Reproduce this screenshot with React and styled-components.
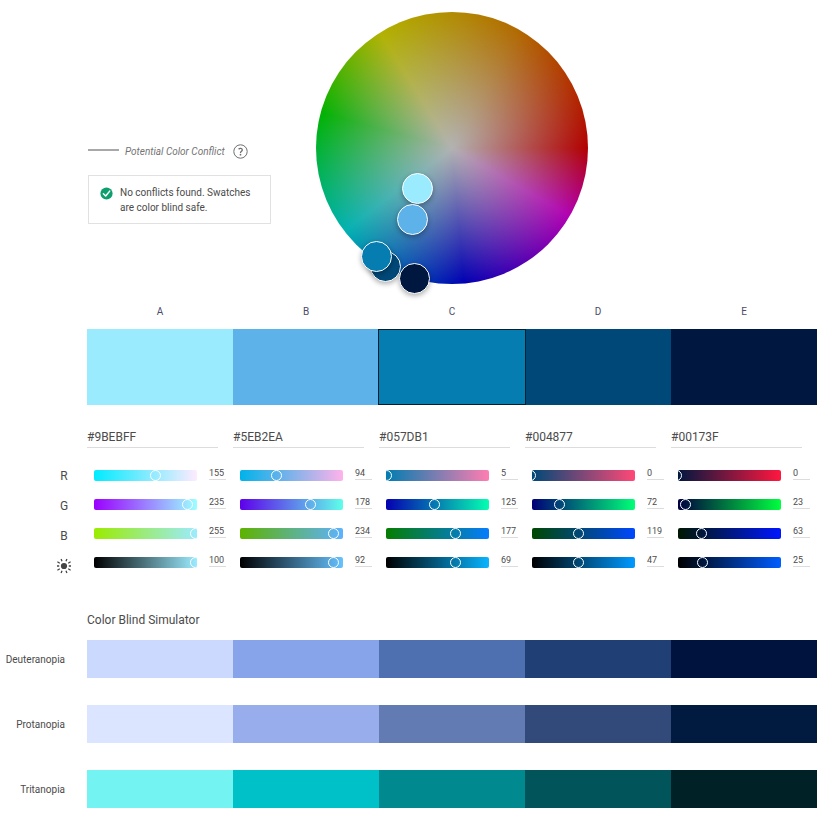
import React, { useState } from "react";
import styled, { createGlobalStyle, css } from "styled-components";

const GlobalStyle = createGlobalStyle`
  *, *::before, *::after { box-sizing: border-box; }
  body {
    margin: 0;
    background: #fff;
    color: #4b4b4b;
    font-family: Roboto, "Noto Sans", sans-serif;
    font-size: 10px;
  }
  input, button { font: inherit; color: inherit; }
`;

const Page = styled.main`
  --gutter: 87px;
  padding: 12px 6px 7px 0;
`;

const Top = styled.section`
  display: grid;
  grid-template-columns: 183px auto;
  justify-content: start;
  column-gap: 45px;
  padding-left: 88px;
`;

const Status = styled.div`
  padding-top: 131px;
`;

const Legend = styled.div`
  display: flex;
  align-items: center;
  height: 16px;
  color: #747474;
  font-style: italic;
  white-space: nowrap;
`;

const LegendLine = styled.span`
  width: 31px;
  height: 2px;
  margin: 0 6px 3px 0;
  background: #a8a8a8;
`;

const HelpButton = styled.button`
  display: flex;
  margin: 0 0 0 8px;
  padding: 0;
  border: 0;
  background: none;
  color: #6e6e6e;
`;

const Notice = styled.div`
  display: flex;
  gap: 7px;
  margin-top: 16px;
  padding: 9px 11px 8px;
  border: 1px solid #e1e1e1;
  line-height: 15px;

  svg { flex: none; margin-top: 2px; }
  p { margin: 0; white-space: nowrap; }
`;

const Wheel = styled.div`
  position: relative;
  width: 272px;
  height: 272px;
  border-radius: 50%;
  background:
    radial-gradient(circle closest-side, #b2b2b2, rgba(178, 178, 178, 0)),
    conic-gradient(
      from 90deg,
      #b20000 0deg, #b200b2 30deg, #0000b2 85deg, #00b2b2 142deg,
      #00b200 195deg, #b2b200 238deg, #b26800 300deg, #b20000 360deg
    );
`;

const Marker = styled.button`
  position: absolute;
  left: ${(p) => p.$x}px;
  top: ${(p) => p.$y}px;
  width: 31px;
  height: 31px;
  padding: 0;
  border: 1px solid #fff;
  border-radius: 50%;
  background: ${(p) => p.$color};
  box-shadow: 0 2px 5px rgba(0, 0, 0, 0.3);
`;

const Columns = styled.div`
  display: grid;
  grid-template-columns: repeat(5, minmax(0, 1fr));
`;

const Palette = styled(Columns)`
  margin: 20px 0 0 var(--gutter);
`;

const Letter = styled.span`
  height: 25px;
  color: #4b4b6a;
  line-height: 16px;
  text-align: center;
`;

const Swatch = styled.button`
  height: 76px;
  padding: 0;
  border: 0;
  background: ${(p) => p.$color};
  ${(p) => p.$selected && css`
    margin-right: -1px;
    margin-left: -1px;
    border: 1px solid #04202e;
    z-index: 1;
  `}
`;

const Editor = styled.section`
  display: grid;
  grid-template-columns: var(--gutter) minmax(0, 1fr);
  margin-top: 24px;
`;

const ChannelNames = styled.div`
  display: flex;
  flex-direction: column;
  align-items: center;
  gap: 14px;
  padding: 39px 0 0 41px;
  font-size: 12px;
  line-height: 16px;
`;

const SunIcon = styled.svg`
  display: block;
`;

const HexInput = styled.input`
  display: block;
  width: 90%;
  height: 19px;
  padding: 0 0 3px;
  border: 0;
  border-bottom: 1px solid #dcdcdc;
  border-radius: 0;
  background: none;
  font-size: 12px;
  outline: none;
`;

const Channels = styled.div`
  display: grid;
  gap: 13px;
  margin-top: 17px;
  padding: 0 7px;
`;

const Channel = styled.div`
  display: grid;
  grid-template-columns: minmax(0, 1fr) 17px;
  column-gap: 12px;
  height: 16px;
`;

const Track = styled.div`
  height: 11px;
  margin-top: 5px;
  overflow: hidden;
  border-radius: 2px;
`;

const Range = styled.input`
  display: block;
  width: calc(100% + 11px);
  height: 11px;
  margin: 0 0 0 -7px;
  appearance: none;
  background: none;

  &::-webkit-slider-thumb {
    appearance: none;
    width: 11px;
    height: 11px;
    border: 1px solid #fff;
    border-radius: 50%;
    background: none;
  }
`;

const ValueInput = styled.input`
  width: 100%;
  height: 15px;
  padding: 1px 0 0;
  border: 0;
  border-bottom: 1px solid #dcdcdc;
  border-radius: 0;
  background: none;
  font-size: 9px;
  outline: none;
`;

const Simulator = styled.section`
  margin-top: 37px;
`;

const Title = styled.h2`
  margin: 0 0 11px var(--gutter);
  font-size: 12px;
  font-weight: 400;
  line-height: 18px;
`;

const SimRows = styled.div`
  display: grid;
  gap: 27px;
`;

const SimRow = styled.div`
  display: grid;
  grid-template-columns: var(--gutter) minmax(0, 1fr);
  align-items: center;
`;

const SimName = styled.span`
  padding-right: 22px;
  text-align: right;
`;

const SimCell = styled.div`
  height: 38px;
  background: ${(p) => p.$color};
`;

const swatches = [
  { letter: "A", hex: "#9BEBFF", rgb: [155, 235, 255], light: 100, x: 86, y: 161 },
  { letter: "B", hex: "#5EB2EA", rgb: [94, 178, 234], light: 92, x: 81, y: 192 },
  { letter: "D", hex: "#004877", rgb: [0, 72, 119], light: 47, x: 54, y: 239 },
  { letter: "C", hex: "#057DB1", rgb: [5, 125, 177], light: 69, x: 45, y: 229 },
  { letter: "E", hex: "#00173F", rgb: [0, 23, 63], light: 25, x: 83, y: 251 },
];
const palette = [...swatches].sort((a, b) => a.letter.localeCompare(b.letter));

const simulations = [
  { name: "Deuteranopia", colors: ["#ccd9ff", "#87a3ea", "#4e6fb0", "#204075", "#00133f"] },
  { name: "Protanopia", colors: ["#dce5ff", "#98aeec", "#627bb2", "#314a79", "#001b3f"] },
  { name: "Tritanopia", colors: ["#73f4f2", "#00c1c8", "#008a90", "#00545a", "#002227"] },
];

const rgbText = (c) => `rgb(${c.map(Math.round).join(", ")})`;

function trackGradient(rgb, channel) {
  if (channel === 3) {
    const peak = Math.max(...rgb);
    return `linear-gradient(to right, #000, ${rgbText(rgb.map((v) => (v * 255) / peak))})`;
  }
  const from = rgb.map((v, i) => (i === channel ? 0 : v));
  const to = rgb.map((v, i) => (i === channel ? 255 : v));
  return `linear-gradient(to right, ${rgbText(from)}, ${rgbText(to)})`;
}

function ChannelControl({ swatch, channel }) {
  const names = ["Red", "Green", "Blue", "Brightness"];
  const [value, setValue] = useState(channel === 3 ? swatch.light : swatch.rgb[channel]);
  const label = `${swatch.letter} ${names[channel]}`;
  const change = (e) => setValue(Number(e.target.value) || 0);
  return (
    <Channel>
      <Track style={{ background: trackGradient(swatch.rgb, channel) }}>
        <Range type="range" min="0" max={channel === 3 ? 100 : 255} value={value} onChange={change} aria-label={label} />
      </Track>
      <ValueInput type="text" value={value} onChange={change} aria-label={`${label} value`} />
    </Channel>
  );
}

function HelpIcon() {
  return (
    <svg width="15" height="15" viewBox="0 0 15 15" fill="none" stroke="currentColor" aria-hidden="true">
      <circle cx="7.5" cy="7.5" r="6.7" />
      <path d="M5.6 5.2C6.6 4.1 9.3 4.1 9.3 6C9.3 7.3 7.5 7.2 7.5 8.9" strokeWidth="1.3" />
      <circle cx="7.5" cy="10.7" r=".85" fill="currentColor" stroke="none" />
    </svg>
  );
}

function CheckIcon() {
  return (
    <svg width="13" height="13" viewBox="0 0 13 13" fill="none" aria-hidden="true">
      <circle cx="6.5" cy="6.5" r="6.1" fill="#0f9f6e" />
      <path d="M3.4 6.7L5.7 9L9.7 4.1" stroke="#fff" strokeWidth="1.5" strokeLinecap="round" strokeLinejoin="round" />
    </svg>
  );
}

function Sun() {
  return (
    <SunIcon width="16" height="16" viewBox="0 0 16 16" role="img" aria-label="Brightness">
      <circle cx="8" cy="8" r="3.1" fill="#454545" />
      <path
        d="M1 8H3.2M12.8 8H15M5.1 1L6 3.2M10.9 1L10 3.2M5.1 15L6 12.8M10.9 15L10 12.8M1.4 3.8L3.8 5.2M14.6 3.8L12.2 5.2M1.4 12.2L3.8 10.8M14.6 12.2L12.2 10.8"
        stroke="#454545"
        strokeWidth="1.3"
      />
    </SunIcon>
  );
}

export default function App() {
  const [selected, setSelected] = useState("C");
  return (
    <>
      <GlobalStyle />
      <Page>
        <Top>
          <Status>
            <Legend>
              <LegendLine />
              Potential Color Conflict
              <HelpButton type="button" aria-label="Help"><HelpIcon /></HelpButton>
            </Legend>
            <Notice role="status">
              <CheckIcon />
              <p>No conflicts found. Swatches<br />are color blind safe.</p>
            </Notice>
          </Status>
          <Wheel>
            {swatches.map((s) => (
              <Marker key={s.letter} type="button" aria-label={`Color ${s.letter}`} $x={s.x} $y={s.y} $color={s.hex} onClick={() => setSelected(s.letter)} />
            ))}
          </Wheel>
        </Top>

        <Palette>
          {palette.map((s) => <Letter key={s.letter}>{s.letter}</Letter>)}
          {palette.map((s) => (
            <Swatch key={s.hex} type="button" aria-label={s.hex} $color={s.hex} $selected={s.letter === selected} onClick={() => setSelected(s.letter)} />
          ))}
        </Palette>

        <Editor>
          <ChannelNames>
            <span>R</span>
            <span>G</span>
            <span>B</span>
            <Sun />
          </ChannelNames>
          <Columns>
            {palette.map((s) => (
              <div key={s.hex}>
                <HexInput type="text" defaultValue={s.hex} aria-label={`Hex ${s.letter}`} />
                <Channels>
                  {[0, 1, 2, 3].map((c) => <ChannelControl key={c} swatch={s} channel={c} />)}
                </Channels>
              </div>
            ))}
          </Columns>
        </Editor>

        <Simulator>
          <Title>Color Blind Simulator</Title>
          <SimRows>
            {simulations.map((row) => (
              <SimRow key={row.name}>
                <SimName>{row.name}</SimName>
                <Columns>
                  {row.colors.map((c) => <SimCell key={c} $color={c} />)}
                </Columns>
              </SimRow>
            ))}
          </SimRows>
        </Simulator>
      </Page>
    </>
  );
}
